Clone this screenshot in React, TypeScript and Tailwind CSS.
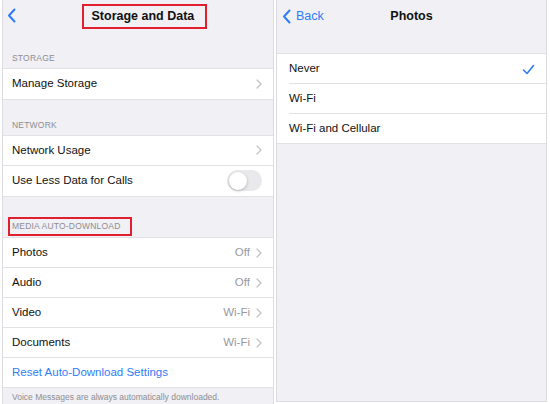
import React from 'react';

const font = { fontFamily: '"Liberation Sans", Arial, sans-serif' };

function Chevron() {
  return (
    <svg width="6" height="10" viewBox="0 0 6 10" className="ml-[6px]">
      <path d="M1 1l4 4-4 4" fill="none" stroke="#c4c4c8" strokeWidth="1.3" strokeLinecap="round" strokeLinejoin="round" />
    </svg>
  );
}

function BackChevron() {
  return (
    <svg width="9" height="15" viewBox="0 0 9 15">
      <path d="M7.5 1.5L2 7.5l5.5 6" fill="none" stroke="#2f7cf6" strokeWidth="2" strokeLinecap="round" strokeLinejoin="round" />
    </svg>
  );
}

function Row({ label, value, chevron = true, last = false }: { label: string; value?: string; chevron?: boolean; last?: boolean }) {
  return (
    <div className={`h-[30px] flex items-center pl-[9px] pr-[11px] ${last ? '' : 'border-b border-[#e2e2e6]'}`}>
      <span className="flex-1 text-[11.5px] text-[#111]">{label}</span>
      {value && <span className="text-[11.5px] text-[#9a9aa0]">{value}</span>}
      {chevron && <Chevron />}
    </div>
  );
}

function Header({ children, boxed = false }: { children: React.ReactNode; boxed?: boolean }) {
  return (
    <div className="h-[26px] flex items-end pb-[3px] pl-[9px]">
      <span className={`text-[8.5px] text-[#8e8e93] tracking-[0.2px] ${boxed ? 'border-2 border-[#e0202e] pl-[2px] pr-[9px] py-[1px] -ml-[4px] -mb-[2px]' : ''}`}>
        {children}
      </span>
    </div>
  );
}

export default function App() {
  return (
    <div className="w-[550px] h-[404px] bg-white flex pl-[2px] overflow-hidden" style={font}>
      {/* left panel */}
      <div className="w-[272px] h-full bg-[#f0f0f5] border-x border-[#dcdce0] flex flex-col">
        <div className="h-[34px] relative flex items-center justify-center">
          <div className="absolute left-[4px] top-[8px]"><BackChevron /></div>
          <div className="border-2 border-[#e0202e] w-[125px] h-[25px] flex items-center pl-[8px] ml-[12px] mt-[-1px]">
            <span className="text-[12.5px] font-bold text-[#111]">Storage and Data</span>
          </div>
        </div>
        <div className="h-[9px]" />
        <Header>STORAGE</Header>
        <div className="bg-white border-y border-[#e2e2e6]">
          <Row label="Manage Storage" last />
        </div>
        <div className="h-[10px]" />
        <Header>NETWORK</Header>
        <div className="bg-white border-y border-[#e2e2e6]">
          <Row label="Network Usage" />
          <div className="h-[30px] flex items-center pl-[9px] pr-[11px]">
            <span className="flex-1 text-[11.5px] text-[#111]">Use Less Data for Calls</span>
            <div className="w-[35px] h-[21px] rounded-full bg-[#e9e9eb] p-[1.5px]">
              <div className="w-[18px] h-[18px] rounded-full bg-white shadow-[0_1px_3px_rgba(0,0,0,0.25)]" />
            </div>
          </div>
        </div>
        <div className="h-[15px]" />
        <Header boxed>MEDIA AUTO-DOWNLOAD</Header>
        <div className="bg-white border-y border-[#e2e2e6]">
          <Row label="Photos" value="Off" />
          <Row label="Audio" value="Off" />
          <Row label="Video" value="Wi-Fi" />
          <Row label="Documents" value="Wi-Fi" />
          <div className="h-[29px] flex items-center pl-[9px]">
            <span className="text-[11.5px] text-[#2f7cf6]">Reset Auto-Download Settings</span>
          </div>
        </div>
        <div className="pl-[9px] pt-[3px] text-[8.5px] text-[#8e8e93]">Voice Messages are always automatically downloaded.</div>
      </div>

      {/* right panel */}
      <div className="w-[271px] ml-[2px] h-[402px] bg-[#f0f0f5] border-x border-b border-[#dcdce0] flex flex-col">
        <div className="h-[34px] relative flex items-center justify-center">
          <div className="absolute left-[5px] top-[8px] flex items-center gap-[5px]">
            <BackChevron />
            <span className="text-[12.5px] text-[#2f7cf6] mt-[-1px]">Back</span>
          </div>
          <span className="text-[12.5px] font-bold text-[#111] mt-[-2px]">Photos</span>
        </div>
        <div className="h-[19px]" />
        <div className="bg-white border-y border-[#e2e2e6]">
          <div className="h-[30px] flex items-center pl-[12px] pr-[11px] relative">
            <span className="flex-1 text-[11.5px] text-[#111]">Never</span>
            <svg width="13" height="11" viewBox="0 0 13 11">
              <path d="M1.5 6l3.5 3.5L11.5 1.5" fill="none" stroke="#2f7cf6" strokeWidth="1.6" strokeLinecap="round" strokeLinejoin="round" />
            </svg>
            <div className="absolute bottom-0 left-[12px] right-0 border-b border-[#e2e2e6]" />
          </div>
          <div className="h-[30px] flex items-center pl-[12px] relative">
            <span className="text-[11.5px] text-[#111]">Wi-Fi</span>
            <div className="absolute bottom-0 left-[12px] right-0 border-b border-[#e2e2e6]" />
          </div>
          <div className="h-[29px] flex items-center pl-[12px]">
            <span className="text-[11.5px] text-[#111]">Wi-Fi and Cellular</span>
          </div>
        </div>
      </div>
    </div>
  );
}
